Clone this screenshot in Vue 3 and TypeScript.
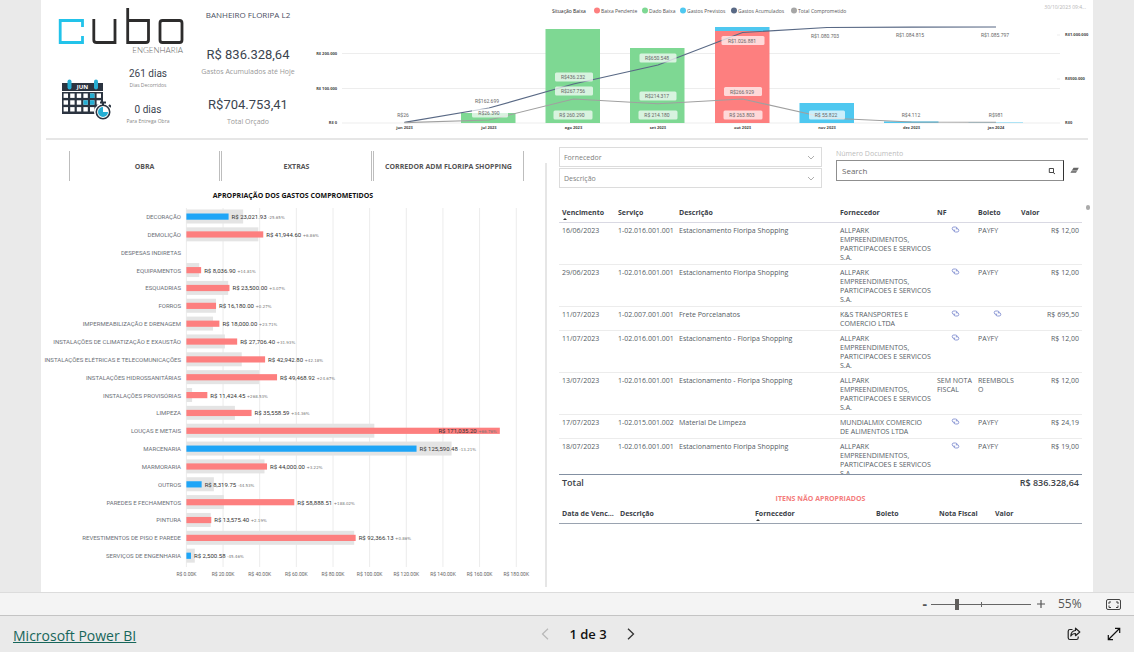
<script setup lang="ts">
import { ref } from 'vue'

interface Month { name: string; x: number }
interface Tag { x: number; y: number; w: number; text: string }
interface Cost { name: string; value: number; pct: number }
interface Expense {
  date: string
  service: string
  description: string
  supplier: string
  nf: string
  boleto: string
  value: string
}

const zoomLevel = ref(55)
const search = ref('')
const supplier = ref('')
const description = ref('')

const legend = [
  { x: 597, label: 'Baixa Pendente', color: '#fd7f7f' },
  { x: 645, label: 'Dado Baixa', color: '#7ed893' },
  { x: 683, label: 'Gastos Previstos', color: '#4fc8f0' },
  { x: 734, label: 'Gastos Acumulados', color: '#596985' },
  { x: 794, label: 'Total Comprometido', color: '#a6a6a6' },
]

const months: Month[] = [
  'jun 2023', 'jul 2023', 'ago 2023', 'set 2023', 'out 2023', 'nov 2023', 'dez 2023', 'jan 2024',
].map((name, i) => ({ name, x: 404.5 + i * 84.5 }))

const columns = [
  { x: 461, top: 113, bottom: 123, color: '#7ed893' },
  { x: 545.5, top: 29, bottom: 123, color: '#7ed893' },
  { x: 630, top: 48, bottom: 123, color: '#7ed893' },
  { x: 715, top: 31, bottom: 123, color: '#fd7f7f' },
  { x: 715, top: 27, bottom: 31, color: '#4fc8f0' },
  { x: 799.5, top: 103, bottom: 123, color: '#4fc8f0' },
  { x: 884, top: 121.4, bottom: 123, color: '#4fc8f0' },
  { x: 968.5, top: 122.3, bottom: 123, color: '#8fdcf5' },
]

const toPoints = (ys: number[]) => ys.map((y, i) => `${months[i].x},${y}`).join(' ')
const accumulated = toPoints([122.4, 108, 84, 65, 32.5, 27.5, 27.2, 27])
const committed = toPoints([122.6, 120, 99, 103.7, 99, 118, 122, 122.3])

const tags: Tag[] = [
  { x: 490, y: 113, w: 36, text: 'R$26.390' },
  { x: 574, y: 77, w: 38, text: 'R$436.232' },
  { x: 574, y: 91, w: 38, text: 'R$267.756' },
  { x: 573, y: 115, w: 39, text: 'R$ 260.290' },
  { x: 658, y: 58, w: 37, text: 'R$650.548' },
  { x: 658, y: 96, w: 37, text: 'R$214.317' },
  { x: 658, y: 115, w: 39, text: 'R$ 214.180' },
  { x: 743, y: 40.5, w: 43, text: 'R$1.026.881' },
  { x: 743, y: 91.5, w: 38, text: 'R$266.929' },
  { x: 743, y: 115, w: 39, text: 'R$ 263.803' },
  { x: 827, y: 115, w: 36, text: 'R$ 55.822' },
]

const plainTags = [
  { x: 403, y: 115, text: 'R$26' },
  { x: 487, y: 101, text: 'R$162.699' },
  { x: 825, y: 36, text: 'R$1.080.703' },
  { x: 910, y: 35, text: 'R$1.084.815' },
  { x: 995, y: 35, text: 'R$1.085.797' },
  { x: 911, y: 115, text: 'R$4.112' },
  { x: 996, y: 115, text: 'R$981' },
]

const costs: Cost[] = [
  { name: 'DECORAÇÃO', value: 23021.93, pct: -25.65 },
  { name: 'DEMOLIÇÃO', value: 41944.6, pct: 6.86 },
  { name: 'DESPESAS INDIRETAS', value: 0, pct: 0 },
  { name: 'EQUIPAMENTOS', value: 8036.9, pct: 14.81 },
  { name: 'ESQUADRIAS', value: 23500, pct: 3.07 },
  { name: 'FORROS', value: 16180, pct: 0.27 },
  { name: 'IMPERMEABILIZAÇÃO E DRENAGEM', value: 18000, pct: 23.71 },
  { name: 'INSTALAÇÕES DE CLIMATIZAÇÃO E EXAUSTÃO', value: 27706.4, pct: 31.93 },
  { name: 'INSTALAÇÕES ELÉTRICAS E TELECOMUNICAÇÕES', value: 42942.8, pct: 42.18 },
  { name: 'INSTALAÇÕES HIDROSSANITÁRIAS', value: 49468.92, pct: 24.67 },
  { name: 'INSTALAÇÕES PROVISÓRIAS', value: 11424.45, pct: 268.53 },
  { name: 'LIMPEZA', value: 35558.59, pct: 34.36 },
  { name: 'LOUÇAS E METAIS', value: 171035.2, pct: 66.76 },
  { name: 'MARCENARIA', value: 125590.48, pct: -13.21 },
  { name: 'MARMORARIA', value: 44000, pct: 3.22 },
  { name: 'OUTROS', value: 8319.75, pct: -44.53 },
  { name: 'PAREDES E FECHAMENTOS', value: 58888.51, pct: 188.02 },
  { name: 'PINTURA', value: 13575.4, pct: 2.19 },
  { name: 'REVESTIMENTOS DE PISO E PAREDE', value: 92366.13, pct: 0.86 },
  { name: 'SERVIÇOS DE ENGENHARIA', value: 2500.58, pct: -45.46 },
]

const originX = 186.4
const scaleX = (v: number) => (v * 36.65) / 20000
const rowY = (i: number) => 216.5 + i * 17.85
const money = (v: number) =>
  'R$ ' + v.toLocaleString('en-US', { minimumFractionDigits: 2, maximumFractionDigits: 2 })
const percent = (p: number) => (p > 0 ? '+' : '') + p.toFixed(2) + '%'
const budget = (c: Cost) => c.value / (1 + c.pct / 100)
const isWide = (c: Cost) => c.value > 150000

const tabs = ['OBRA', 'EXTRAS', 'CORREDOR ADM FLORIPA SHOPPING']

const allpark = 'ALLPARK EMPREENDIMENTOS, PARTICIPACOES E SERVICOS S.A.'
const expenses: Expense[] = [
  { date: '16/06/2023', service: '1-02.016.001.001', description: 'Estacionamento Floripa Shopping', supplier: allpark, nf: 'link', boleto: 'PAYFY', value: 'R$ 12,00' },
  { date: '29/06/2023', service: '1-02.016.001.001', description: 'Estacionamento Floripa Shopping', supplier: allpark, nf: 'link', boleto: 'PAYFY', value: 'R$ 12,00' },
  { date: '11/07/2023', service: '1-02.007.001.001', description: 'Frete Porcelanatos', supplier: 'K&S TRANSPORTES E COMERCIO LTDA', nf: 'link', boleto: 'link', value: 'R$ 695,50' },
  { date: '11/07/2023', service: '1-02.016.001.001', description: 'Estacionamento - Floripa Shopping', supplier: allpark, nf: 'link', boleto: 'PAYFY', value: 'R$ 12,00' },
  { date: '13/07/2023', service: '1-02.016.001.001', description: 'Estacionamento - Floripa Shopping', supplier: allpark, nf: 'SEM NOTA FISCAL', boleto: 'REEMBOLSO', value: 'R$ 12,00' },
  { date: '17/07/2023', service: '1-02.015.001.002', description: 'Material De Limpeza', supplier: 'MUNDIALMIX COMERCIO DE ALIMENTOS LTDA', nf: 'link', boleto: 'PAYFY', value: 'R$ 24,19' },
  { date: '18/07/2023', service: '1-02.016.001.001', description: 'Estacionamento Floripa Shopping', supplier: allpark, nf: 'link', boleto: 'PAYFY', value: 'R$ 19,00' },
]
</script>

<template>
  <div class="shell">
    <main class="stage">
      <div class="report">
        <header class="summary">
          <div class="brand">
            <svg class="logo" viewBox="0 0 126 48" role="img" aria-label="Cubo Engenharia">
              <g fill="none" stroke-width="2.8" stroke="#2d2c2c">
                <path d="M24.500 19V12.500H2.200V34.500H24.500V28" stroke="#22c3ea" />
                <path d="M35.800 11V32Q35.800 34.500 38.500 34.500H57V11" />
                <path d="M69.700 0V34.500H88Q90.500 34.500 90.500 32V12.500H69.700" />
                <rect x="102" y="12.500" width="22" height="22" rx="2.500" />
              </g>
              <text x="125" y="45" text-anchor="end" class="logo-sub">ENGENHARIA</text>
            </svg>
            <div class="days">
              <svg class="calendar" viewBox="0 0 50 42" aria-hidden="true">
                <path fill="#2b3440" d="M1 4h41v8H1zM1 13h41v22H1z" />
                <g fill="#fff">
                  <rect v-for="n in 18" :key="n" :x="2.600 + ((n - 1) % 6) * 6.600" :y="14.500 + Math.floor((n - 1) / 6) * 6.800" width="4.400" height="4.400" />
                </g>
                <path fill="#25aed3" d="M29 14.500h4.400v4.400H29zM22.400 21.300h4.400v4.400h-4.400zM29 21.300h4.400v4.400H29z" />
                <rect x="6.500" y="0.500" width="4" height="10" rx="2" fill="#25aed3" />
                <rect x="33" y="0.500" width="4" height="10" rx="2" fill="#25aed3" />
                <text x="21.500" y="10" text-anchor="middle" class="cal-text">JUN</text>
                <circle cx="42" cy="33" r="9" fill="#fff" />
                <path d="M39 23.500h6M42 24v3M48 26l2 2M35.500 26l-1.500 1.500" stroke="#2b3440" stroke-width="2" />
                <circle cx="42" cy="33" r="6.700" fill="#fff" stroke="#2b3440" stroke-width="1.600" />
                <path fill="#25aed3" d="M42 33V28a5 5 0 1 0 5 5z" />
              </svg>
              <dl class="day-list">
                <div><dd>261 dias</dd><dt>Dias Decorridos</dt></div>
                <div><dd>0 dias</dd><dt>Para Entrega Obra</dt></div>
              </dl>
            </div>
          </div>
          <div class="kpis">
            <h1>BANHEIRO FLORIPA L2</h1>
            <dl>
              <div><dd>R$ 836.328,64</dd><dt>Gastos Acumulados até Hoje</dt></div>
              <div><dd>R$704.753,41</dd><dt>Total Orçado</dt></div>
            </dl>
          </div>
          <svg class="combo" viewBox="310 0 783 138" role="img" aria-label="Gastos por mês">
            <text x="552" y="12.500" class="legend strong">Situação Baixa</text>
            <g v-for="l in legend" :key="l.label">
              <circle :cx="l.x" cy="10.500" r="3" :fill="l.color" />
              <text :x="l.x + 4" y="12.500" class="legend">{{ l.label }}</text>
            </g>
            <text x="1086" y="9" text-anchor="end" class="stamp">30/10/2023 09:4...</text>

            <path d="M342 53.500H1060M342 88.500H1060M342 123H1060M1057 35H1060M1057 79H1060" stroke="#ededed" />
            <g class="axis">
              <text x="337" y="55" text-anchor="end">R$ 200.000</text>
              <text x="337" y="90" text-anchor="end">R$ 100.000</text>
              <text x="337" y="124" text-anchor="end">R$ 0</text>
              <text x="1065" y="36">R$1.000.000</text>
              <text x="1065" y="80">R$500.000</text>
              <text x="1065" y="124">R$0</text>
              <text v-for="m in months" :key="m.name" :x="m.x" y="129" text-anchor="middle">{{ m.name }}</text>
            </g>
            <rect v-for="(c, i) in columns" :key="i" :x="c.x" :y="c.top" width="54.500" :height="c.bottom - c.top" :fill="c.color" />
            <polyline :points="accumulated" fill="none" stroke="#596985" stroke-width="1.200" />
            <polyline :points="committed" fill="none" stroke="#a0a0a0" stroke-width="1.100" />
            <g v-for="t in tags" :key="t.text">
              <rect :x="t.x - t.w / 2" :y="t.y - 4.500" :width="t.w" height="9" rx="1.500" fill="#fff" fill-opacity="0.700" />
              <text :x="t.x - 1" :y="t.y + 2" text-anchor="middle" class="tag">{{ t.text }}</text>
            </g>
            <text v-for="t in plainTags" :key="t.text" :x="t.x" :y="t.y + 2" text-anchor="middle" class="tag">{{ t.text }}</text>
          </svg>
        </header>

        <div class="panels">
          <section class="left">
            <nav class="tabs">
              <button v-for="t in tabs" :key="t" type="button">{{ t }}</button>
            </nav>
            <h2>APROPRIAÇÃO DOS GASTOS COMPROMETIDOS</h2>
            <svg class="bars" viewBox="41 203 504 378" role="img" aria-label="Apropriação dos gastos comprometidos">
              <path v-for="n in 10" :key="n" :d="`M${originX + (n - 1) * 36.65} 208V567`" stroke="#ececec" />
              <g v-for="(c, i) in costs" :key="c.name">
                <text x="181" :y="rowY(i) + 2.500" text-anchor="end" class="category">{{ c.name }}</text>
                <template v-if="c.value">
                  <rect :x="originX" :y="rowY(i) - 7" :width="scaleX(budget(c))" height="14" fill="#e4e4e4" />
                  <rect :x="originX" :y="rowY(i) - 3" :width="scaleX(c.value)" height="6.200" :fill="c.pct < 0 ? '#1ea5f7' : '#fd7f7f'" />
                  <text :x="originX + scaleX(c.value) + (isWide(c) ? -3 : 3)" :y="rowY(i) + 2.500" :text-anchor="isWide(c) ? 'end' : 'start'" class="amount">{{ money(c.value) }}<tspan dx="1.500" class="pct">{{ percent(c.pct) }}</tspan></text>
                </template>
              </g>
              <text v-for="n in 10" :key="'a' + n" :x="originX + (n - 1) * 36.65" y="576" text-anchor="middle" class="tick">R$ {{ ((n - 1) * 20).toFixed(2) }}K</text>
            </svg>
          </section>

          <div class="separator"></div>

          <section class="right">
            <div class="filters">
              <div class="selects">
                <div class="select">
                  <select v-model="supplier" aria-label="Fornecedor"><option value="">Fornecedor</option></select>
                  <svg viewBox="0 0 8 5" aria-hidden="true"><path d="M1 1l3 3 3-3" fill="none" stroke="#999" stroke-width="0.800" /></svg>
                </div>
                <div class="select">
                  <select v-model="description" aria-label="Descrição"><option value="">Descrição</option></select>
                  <svg viewBox="0 0 8 5" aria-hidden="true"><path d="M1 1l3 3 3-3" fill="none" stroke="#999" stroke-width="0.800" /></svg>
                </div>
              </div>
              <div class="search">
                <label for="doc">Número Documento</label>
                <div class="search-row">
                  <div class="search-box">
                    <input id="doc" v-model="search" type="text" placeholder="Search" />
                    <button type="button" aria-label="Pesquisar">
                      <svg viewBox="0 0 8 8"><path d="M5 5.300L7 7M1.300 1.500H5.500V5.500H1.300z" fill="none" stroke="#333" stroke-width="0.900" /></svg>
                    </button>
                  </div>
                  <button type="button" class="erase" aria-label="Limpar">
                    <svg viewBox="0 0 9 7"><path d="M3.500 .8H8.800L6 5.800H.4z" fill="#666" /><path d="M1.600 3.800H7" stroke="#fff" stroke-width="0.500" /></svg>
                  </button>
                </div>
              </div>
            </div>

            <div class="table-view">
              <div class="table-clip">
                <table class="expenses">
                  <colgroup><col class="c-date" /><col class="c-service" /><col class="c-desc" /><col class="c-supplier" /><col class="c-nf" /><col class="c-boleto" /><col class="c-value" /></colgroup>
                  <thead>
                    <tr><th class="sorted">Vencimento</th><th>Serviço</th><th>Descrição</th><th>Fornecedor</th><th>NF</th><th>Boleto</th><th>Valor</th></tr>
                  </thead>
                  <tbody>
                    <tr v-for="(e, i) in expenses" :key="i">
                      <td>{{ e.date }}</td>
                      <td>{{ e.service }}</td>
                      <td>{{ e.description }}</td>
                      <td class="supplier">{{ e.supplier }}</td>
                      <td v-for="(v, k) in [e.nf, e.boleto]" :key="k">
                        <a v-if="v === 'link'" href="#" aria-label="Abrir documento">
                          <svg viewBox="0 0 9 7"><path d="M4.200 4.200H2.800a1.600 1.600 0 0 1 0-3.200H4.500a1.600 1.600 0 0 1 1.500 2M4.800 2.800H6.200a1.600 1.600 0 0 1 0 3.200H4.500A1.600 1.600 0 0 1 3 4" fill="none" stroke="#7383cb" stroke-width="0.800" /></svg>
                        </a>
                        <template v-else>{{ v }}</template>
                      </td>
                      <td class="num">{{ e.value }}</td>
                    </tr>
                  </tbody>
                </table>
              </div>
              <span class="scroll-dot"></span>
            </div>
            <div class="total"><span>Total</span><span>R$ 836.328,64</span></div>
            <h3>ITENS NÃO APROPRIADOS</h3>
            <table class="pending">
              <colgroup><col class="p-date" /><col class="p-desc" /><col class="p-supplier" /><col class="p-boleto" /><col class="p-nf" /><col class="p-value" /></colgroup>
              <thead>
                <tr><th>Data de Venc...</th><th>Descrição</th><th class="sorted">Fornecedor</th><th>Boleto</th><th>Nota Fiscal</th><th>Valor</th></tr>
              </thead>
            </table>
          </section>
        </div>
      </div>
    </main>

    <div class="zoombar">
      <button type="button" aria-label="Reduzir" @click="zoomLevel -= 5">-</button>
      <div class="slider">
        <input v-model.number="zoomLevel" type="range" min="10" max="190" aria-label="Zoom" />
      </div>
      <button type="button" aria-label="Ampliar" @click="zoomLevel += 5">
        <svg viewBox="0 0 8 8"><path d="M0 4H8M4 0V8" stroke="#555" stroke-width="1.200" /></svg>
      </button>
      <output>{{ zoomLevel }}%</output>
      <button type="button" class="fit" aria-label="Ajustar à página">
        <svg viewBox="0 0 15 11"><g fill="none" stroke="#444"><rect x=".5" y=".5" width="14" height="10" rx="1.500" /><path d="M5 3H3V5M10 3h2v2M3 6.500V8.500H5M12 6.500V8.500H10" /></g></svg>
      </button>
    </div>

    <footer class="footer">
      <a href="#">Microsoft Power BI</a>
      <div class="pager">
        <button type="button" aria-label="Página anterior" disabled>
          <svg viewBox="0 0 8 12"><path d="M7 .7L1.500 6 7 11.300" fill="none" stroke="#b8b8b8" stroke-width="1.200" /></svg>
        </button>
        <span>1 de 3</span>
        <button type="button" aria-label="Próxima página">
          <svg viewBox="0 0 8 12"><path d="M1 .7L6.500 6 1 11.300" fill="none" stroke="#333" stroke-width="1.300" /></svg>
        </button>
      </div>
      <div class="actions">
        <button type="button" aria-label="Compartilhar">
          <svg viewBox="0 0 14 14"><path d="M5.500 2.500H3A1.800 1.800 0 0 0 1.200 4.300v6.400A1.800 1.800 0 0 0 3 12.500h6.400a1.800 1.800 0 0 0 1.800-1.800V9.500M8.500 1.200L12.800 5 8.500 8.700V6.500C6.200 6.500 4.800 7.300 3.800 9 4 6 5.500 3.700 8.500 3.500z" fill="none" stroke="#222" stroke-width="1.200" stroke-linejoin="round" /></svg>
        </button>
        <button type="button" aria-label="Tela cheia">
          <svg viewBox="0 0 14 14"><path d="M1.500 12.500L12.500 1.500M8 1.300H12.700V6M1.300 8v4.700H6" fill="none" stroke="#111" stroke-width="1.200" /></svg>
        </button>
      </div>
    </footer>
  </div>
</template>

<style>
body { margin: 0; }
</style>

<style scoped>
* { box-sizing: border-box; }
.shell { min-height: 100vh; display: flex; flex-direction: column; background: #eaeaea; font-family: "Open Sans", "Noto Sans", sans-serif; color: #555c64; }
h1, h2, h3, dl, dd, dt { margin: 0; font-weight: 400; }
button { border: 0; padding: 0; background: none; font-family: inherit; color: inherit; cursor: pointer; }
svg { display: block; }

.stage { flex: 1; display: flex; padding: 0 41px; }
.report { flex: 1; min-width: 0; display: flex; flex-direction: column; background: #fff; }

.summary { display: grid; grid-template-columns: 145px 124px 1fr; }
.summary + .panels::before { content: ""; grid-column: 1 / -1; height: 2px; margin: 0 5px; background: #e6e6e6; }
.brand { padding: 8px 0 0 17px; }
.logo { width: 126px; height: 48px; }
.logo-sub { font: 300 8px Lato, sans-serif; fill: #666; }
.days { display: flex; gap: 9px; padding: 11px 0 0 3px; }
.calendar { width: 50px; height: 42px; margin-top: 12px; flex: none; }
.cal-text { font: 700 6px "Open Sans", sans-serif; fill: #fff; }
.day-list { width: 56px; text-align: center; display: grid; gap: 14px; align-content: start; white-space: nowrap; }
.day-list dd { font: 10px/13px Roboto, sans-serif; color: #3b4450; }
.day-list dt { font-size: 5px; line-height: 10px; color: #888; }
.day-list { gap: 13px; }
.kpis { text-align: center; padding-top: 9px; white-space: nowrap; }
.kpis h1 { font-size: 8px; line-height: 12px; color: #4b4f63; }
.kpis dl { display: grid; gap: 17px; padding-top: 25px; }
.kpis dd { font: 13px/18px Roboto, sans-serif; color: #3b4450; }
.kpis dt { font-size: 7px; line-height: 15px; color: #999; }
.combo { width: 100%; height: auto; }
.legend { font-size: 5px; fill: #555; }
.strong { fill: #222; }
.stamp { font-size: 5px; fill: #b5b5b5; }
.axis { font-size: 4px; font-weight: 700; fill: #444; }
.tag { font: 5px Roboto, sans-serif; fill: #666; }

.panels { flex: 1; display: grid; grid-template-columns: 504fr 2px 546fr; grid-template-rows: 2px 1fr; }
.left { min-width: 0; padding-top: 11px; }
.tabs { display: grid; grid-template-columns: repeat(3, 1fr); gap: 1px; margin: 0 21px 0 28px; }
.tabs button { height: 30px; border: solid #bdbdbd; border-width: 0 1px; font-size: 7px; font-weight: 700; color: #555; white-space: nowrap; }
h2 { font-size: 7px; line-height: 10px; font-weight: 700; color: #111; text-align: center; margin: 10px 0 2px; }
.bars { width: 100%; height: auto; }
.category { font: 6px Roboto, sans-serif; fill: #6b7078; }
.amount { font: 6px Roboto, sans-serif; fill: #333; }
.pct { font: 4px "DejaVu Sans", sans-serif; fill: #777; }
.tick { font: 5px Roboto, sans-serif; fill: #666; }
.separator { margin: 23px 0 5px; background: #e6e6e6; }

.right { min-width: 0; padding: 7px 11px 0 12px; }
.filters { display: grid; grid-template-columns: 263fr 246fr; gap: 14px; }
.selects { display: grid; gap: 1px; }
.select { display: grid; align-items: center; grid-template-columns: 1fr 8px 6px; border: 1px solid #dcdcdc; height: 20px; }
.select select { appearance: none; border: 0; background: none; grid-area: 1 / 1 / 2 / 4; height: 18px; padding: 0 4px; font: 7px "Open Sans", sans-serif; color: #808080; }
.select svg { grid-area: 1 / 2; width: 8px; height: 5px; pointer-events: none; }
.search { display: grid; align-content: start; }
.search label { font-size: 7px; line-height: 13px; color: #bcbcbc; }
.search-row { display: flex; align-items: center; gap: 6px; padding-right: 3px; }
.search-box { flex: 1; display: flex; align-items: center; height: 21px; border: 1px solid #8f8f8f; border-right-color: #333; padding: 0 7px 0 5px; }
.search-box input { flex: 1; min-width: 0; border: 0; outline: 0; padding: 0; background: none; font: 8px "Open Sans", sans-serif; }
.search-box input::placeholder { color: #666; }
.search-box svg { width: 8px; height: 8px; }
.erase svg { width: 9px; height: 7px; }

.table-view { position: relative; margin-top: 19px; }
.table-clip { max-height: 267px; overflow: hidden; }
table { width: 100%; table-layout: fixed; border-collapse: separate; border-spacing: 0; font-size: 7px; line-height: 9px; }
th { position: relative; height: 16px; padding: 1px 1px 5px 3px; text-align: left; font-weight: 700; color: #3b4148; white-space: nowrap; border-bottom: 1px solid #d9d9e3; }
.sorted::after { content: ""; position: absolute; left: 4px; bottom: 2px; border: solid transparent; border-width: 0 2px 2px; border-bottom-color: #333; }
td { padding: 3px 1px 2px 3px; vertical-align: top; border-bottom: 1px solid #ececec; overflow-wrap: anywhere; }
td:nth-child(-n + 3) { white-space: nowrap; }
td.supplier { padding-right: 2px; }
td a { display: block; }
td a svg { width: 9px; height: 7px; margin: 0 auto; }
td.num { text-align: right; padding-right: 3px; white-space: nowrap; }
.c-date { width: 56px; }
.c-service { width: 61px; }
.c-desc { width: 161px; }
.c-supplier { width: 97px; }
.c-nf { width: 41px; }
.c-boleto { width: 43px; }
.c-value { width: 64px; }
.scroll-dot { position: absolute; right: -8px; top: -2px; width: 4px; height: 5px; border-radius: 2px; background: #aaa; }
.total { display: flex; justify-content: space-between; border-top: 1px solid #8390a2; padding: 1px 3px 0; font-size: 9px; line-height: 13px; font-weight: 600; color: #3b4148; }
h3 { margin: 5px 0 4px; text-align: center; font-size: 7px; line-height: 10px; font-weight: 700; color: #f47c7c; }
.pending th { border-bottom-color: #9aa3b0; }
.p-date { width: 58px; }
.p-desc { width: 135px; }
.p-supplier { width: 121px; }
.p-boleto { width: 63px; }
.p-nf { width: 56px; }
.p-value { width: 90px; }

.zoombar { display: flex; align-items: center; justify-content: flex-end; height: 24px; padding-right: 13px; background: #f4f4f4; border-top: 1px solid #dcdcdc; border-bottom: 1px solid #c4c4c4; color: #555; }
.zoombar button { font-size: 14px; line-height: 20px; font-weight: 700; }
.zoombar button svg { width: 8px; height: 8px; }
.slider { display: flex; width: 100px; margin: 0 6px 0 4px; background: linear-gradient(#666, #666) center / 1px 5px no-repeat; }
.slider input { appearance: none; width: 100%; height: 12px; margin: 0; background: linear-gradient(#666, #666) center / 100% 1px no-repeat; }
.slider input::-webkit-slider-thumb { appearance: none; width: 4px; height: 11px; background: #605e5c; }
.zoombar output { font-size: 12px; line-height: 20px; width: 24px; margin: 0 24px 0 13px; }
.zoombar .fit svg { width: 15px; height: 11px; }

.footer { display: grid; grid-template-columns: 1fr auto 1fr; align-items: center; height: 36px; padding: 0 13px; font-size: 13px; }
.footer > a { padding-top: 2px; font-size: 14px; color: #17665a; text-decoration: underline; white-space: nowrap; }
.pager { display: flex; align-items: center; gap: 20px; margin-left: 42px; color: #111; font-weight: 600; }
.pager svg { width: 8px; height: 12px; }
.actions { display: flex; justify-content: flex-end; gap: 26px; }
.actions svg { width: 14px; height: 14px; }
</style>
